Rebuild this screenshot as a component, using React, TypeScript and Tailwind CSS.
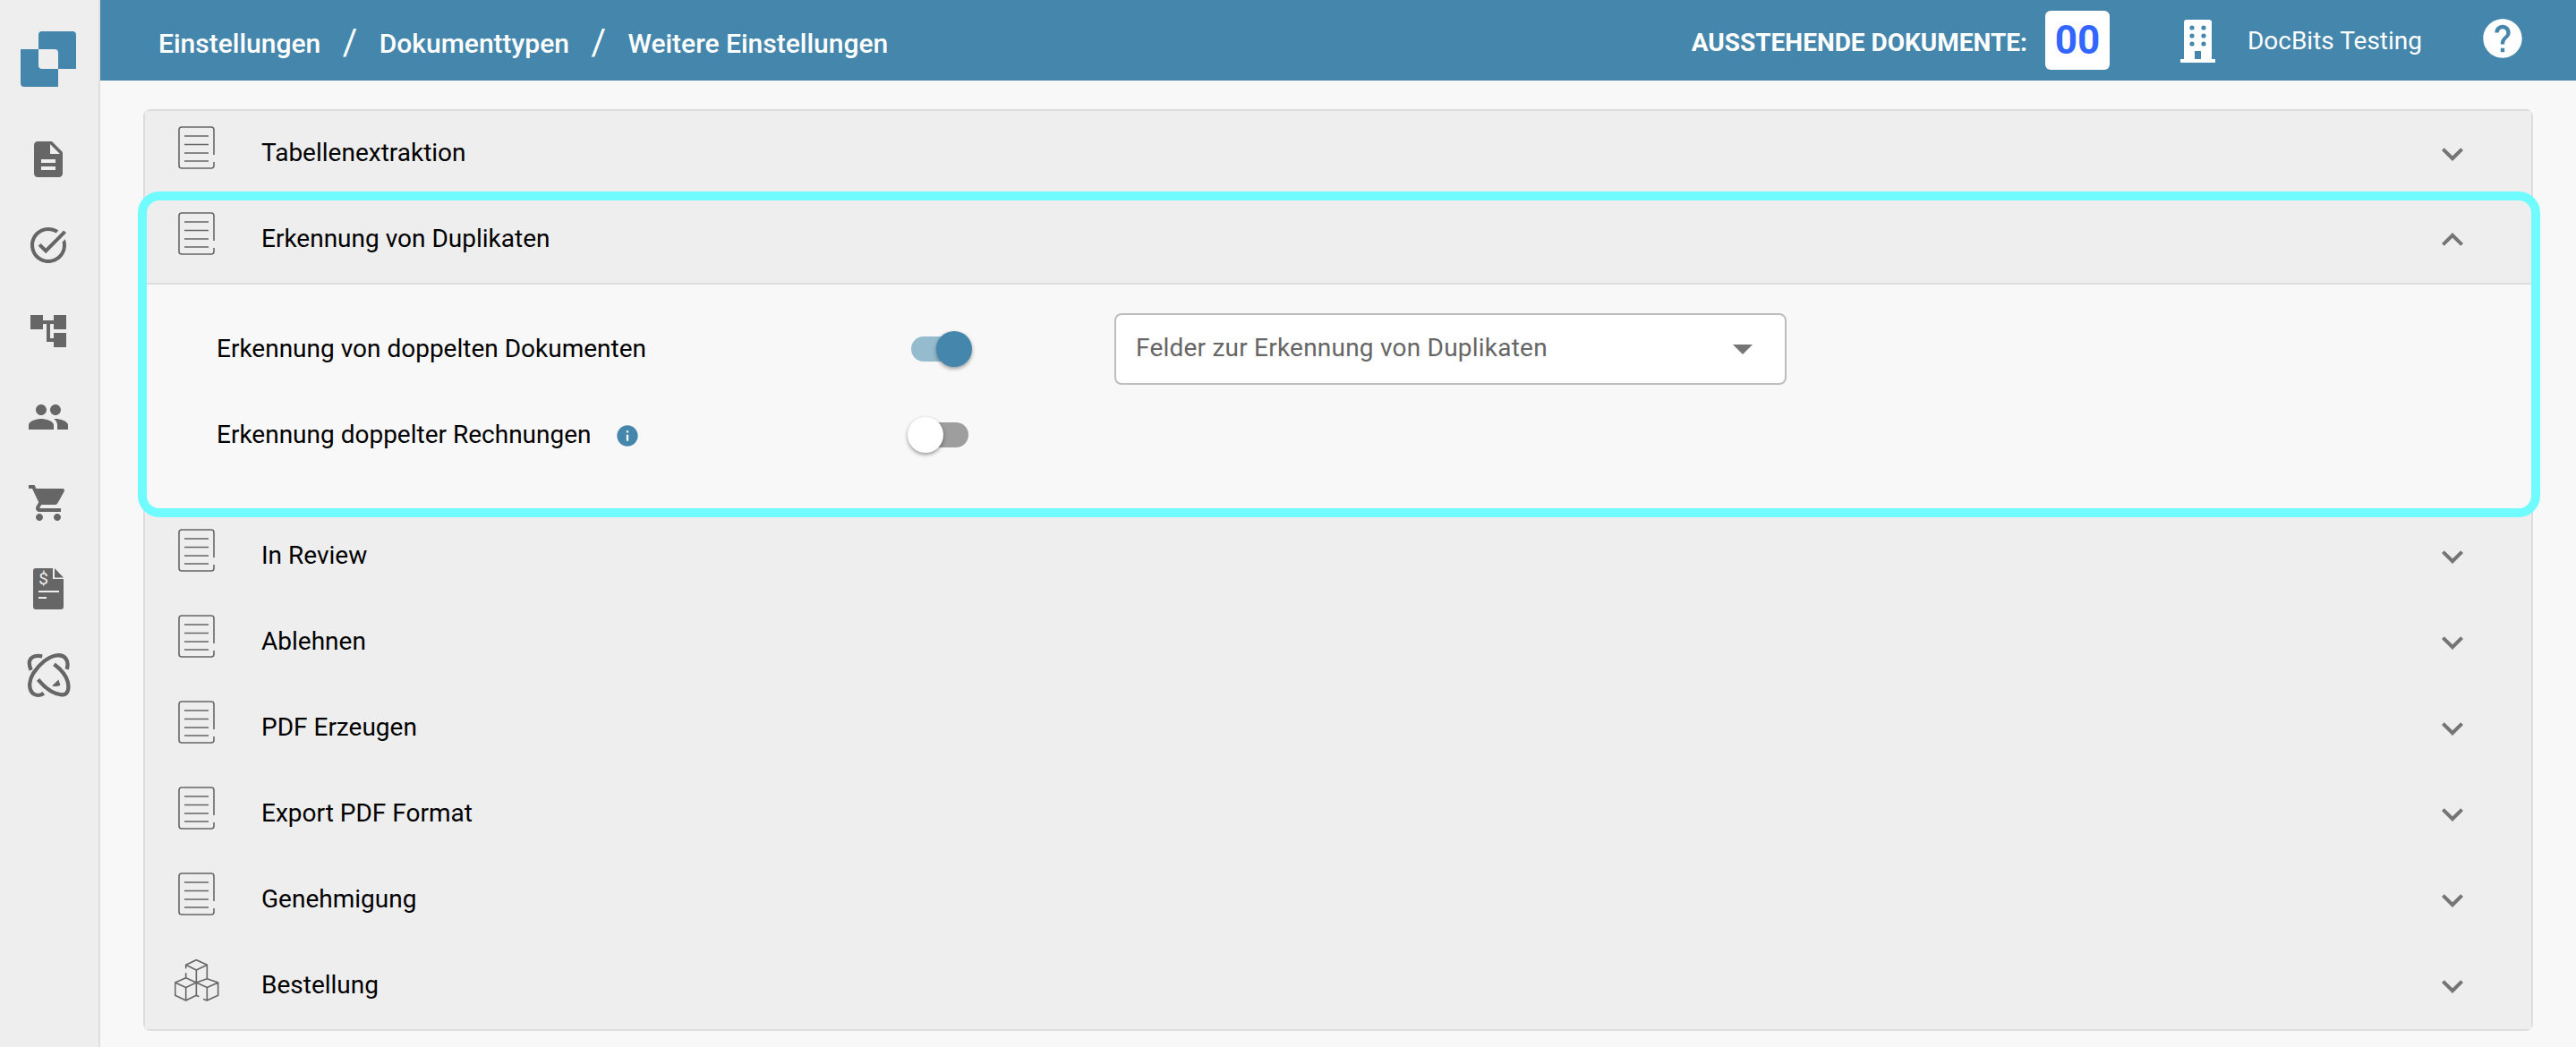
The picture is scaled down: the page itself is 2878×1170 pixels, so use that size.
import React from 'react';
import {
  MdAccountTree,
  MdDescription,
  MdExpandLess,
  MdExpandMore,
  MdHelp,
  MdInfo,
  MdPeople,
  MdShoppingCart,
  MdTaskAlt,
} from 'react-icons/md';

const Logo = () => (
  <svg width="62" height="62" viewBox="0 0 62 62">
    <path d="M20 4a4 4 0 0 1 4-4h34a4 4 0 0 1 4 4v38H42V24a4 4 0 0 0-4-4H20z" fill="#4587ac" />
    <path d="M0 20h20v18a4 4 0 0 0 4 4h18v20H4a4 4 0 0 1-4-4z" fill="#4587ac" />
  </svg>
);

const InvoiceIcon = () => (
  <svg width="34" height="46" viewBox="0 0 34 46">
    <path d="M3 0h19v12h12v31a3 3 0 0 1-3 3H3a3 3 0 0 1-3-3V3a3 3 0 0 1 3-3z" fill="#666" />
    <path d="M24 0l10 10.500H24z" fill="#666" />
    <text x="11.500" y="17.500" textAnchor="middle" fontFamily="Roboto" fontSize="19" fill="#eee">$</text>
    <rect x="6" y="25" width="23" height="2" fill="#eee" />
    <rect x="6" y="32" width="9" height="2" fill="#eee" />
  </svg>
);

const OrbitIcon = () => (
  <svg width="49" height="49" viewBox="28 28 148 148" fill="none" stroke="#666" strokeWidth="13">
    <path d="M163 82C172 50 155 33 130 35C100 38 70 65 50 95C35 120 32 150 50 165C60 172 75 170 85 163" />
    <path d="M80 38C60 35 42 38 37 55C35 65 38 75 42 85" />
    <path d="M66 117C85 140 115 165 145 168C165 170 172 150 166 125C160 100 140 80 120 65" />
    <path d="M113 138L135 117L141 136Q128 142 113 138z" fill="#666" stroke="none" />
  </svg>
);

const BuildingIcon = () => (
  <svg width="39" height="48" viewBox="0 0 39 48" fill="white">
    <path d="M7 0h25a3 3 0 0 1 3 3v41h3a1.500 1.500 0 0 1 0 4H1a1.500 1.500 0 0 1 0-4h3V3a3 3 0 0 1 3-3z" />
    <g fill="#4587ac">
      <circle cx="13" cy="9" r="2.600" /><circle cx="26" cy="9" r="2.600" />
      <circle cx="13" cy="18" r="2.600" /><circle cx="26" cy="18" r="2.600" />
      <circle cx="13" cy="27" r="2.600" /><circle cx="26" cy="27" r="2.600" />
      <rect x="16" y="35" width="7" height="9" />
    </g>
  </svg>
);

const PaperIcon = () => (
  <svg width="41" height="48" viewBox="0 0 41 48" fill="none" stroke="#666" strokeWidth="1.600">
    <path d="M40 32V4a3 3 0 0 0-3-3H4a3 3 0 0 0-3 3v40a3 3 0 0 0 3 3h33a3 3 0 0 0 3-3v-4" />
    <path d="M7 11h27M7 20.500h27M7 30h27M7 39h27" />
  </svg>
);

const CubesIcon = () => (
  <svg width="50" height="47" viewBox="26 28 154 145" fill="none" stroke="#666" strokeWidth="5" strokeLinejoin="round" className="shrink-0">
    <path d="M65 47L101 30L138 47L101 65zM101 65V152M138 47V95M65 47V60M65 75V92" />
    <path d="M28 108L65 92L101 108L65 125zM28 108V152L65 170L101 152M65 125V170" />
    <path d="M101 108L138 95L176 108L138 125zM138 125V168M176 108V152L138 170L125 165M101 152L110 157" />
  </svg>
);

const sideIcons = [
  <MdDescription size={48} />,
  <MdTaskAlt size={48} />,
  <MdAccountTree size={48} />,
  <MdPeople size={48} />,
  <MdShoppingCart size={48} />,
  <InvoiceIcon />,
  <OrbitIcon />,
];

const RowHead = ({ label, open, cubes }: { label: string; open?: boolean; cubes?: boolean }) => (
  <div className="flex h-[96px] items-center bg-[#eeeeee] pl-[37px] pr-[64px]">
    <div className="mb-[14px] flex w-[41px] shrink-0 justify-center">{cubes ? <CubesIcon /> : <PaperIcon />}</div>
    <span className="mb-[3px] ml-[52px] flex-1 text-[28px] text-black">{label}</span>
    {open ? <MdExpandLess size={48} className="text-[#757575]" /> : <MdExpandMore size={48} className="text-[#757575]" />}
  </div>
);

export default function App() {
  return (
    <div className="flex h-[1170px] w-[2878px] overflow-hidden bg-[#f8f8f8] font-['Roboto',sans-serif]">
      {/* Sidebar */}
      <aside className="flex w-[112px] shrink-0 flex-col border-r-2 border-[#e0e0e0] bg-[#eeeeee]">
        <div className="flex h-[130px] justify-center pr-[2px] pt-[35px]">
          <Logo />
        </div>
        {sideIcons.map((icon, i) => (
          <div key={i} className="flex h-[96px] items-center justify-center pr-[2px] text-[#666666]">
            {icon}
          </div>
        ))}
      </aside>

      <div className="flex min-w-0 flex-1 flex-col">
        {/* Top bar */}
        <header className="flex h-[90px] shrink-0 items-center bg-[#4587ac] pl-[65px] text-white">
          <div className="mt-[6px] flex items-center text-[30px] font-medium">
            <span>Einstellungen</span>
            <span className="mx-[24.5px] text-[40px] font-normal">/</span>
            <span>Dokumenttypen</span>
            <span className="mx-[24.5px] text-[40px] font-normal">/</span>
            <span>Weitere Einstellungen</span>
          </div>
          <div className="ml-auto flex items-center pr-[56px]">
            <span className="mt-[6px] text-[28px] font-bold">AUSSTEHENDE DOKUMENTE:</span>
            <span className="ml-[20px] flex h-[66px] w-[72px] items-center justify-center rounded-[6px] bg-white text-[44px] font-bold text-[#3366ff]">
              00
            </span>
            <span className="ml-[79px] mt-[2px]"><BuildingIcon /></span>
            <span className="ml-[36px] mt-[2px] text-[28px]">DocBits Testing</span>
            <MdHelp size={52} className="mb-[5px] ml-[64px]" />
          </div>
        </header>

        {/* Accordion */}
        <main className="mx-[48px] mt-[32px] rounded-[8px] border-2 border-[#dddddd] bg-[#eeeeee]">
          <RowHead label="Tabellenextraktion" />
          <section className="relative">
            <RowHead label="Erkennung von Duplikaten" open />
            <div className="border-t-2 border-[#dddddd] bg-[#f8f8f8] pb-[40px] pl-[80px] pt-[24px] text-[28px] text-black">
              <div className="flex h-[96px] items-center">
                <span className="w-[776px]">Erkennung von doppelten Dokumenten</span>
                <span className="relative h-[28px] w-[62px] rounded-full bg-[#95bbcf]">
                  <span className="absolute right-[-6px] top-[-6px] h-[40px] w-[40px] rounded-full bg-[#4587ac] shadow-[0_2px_4px_rgba(0,0,0,0.4)]" />
                </span>
                <div className="ml-[165px] flex h-[80px] w-[751px] items-center justify-between rounded-[8px] border-2 border-[#bdbdbd] bg-white pl-[22px] pr-[36px] text-[#666666]">
                  <span className="mb-[3px] tracking-[0.22px]">Felder zur Erkennung von Duplikaten</span>
                  <span className="h-0 w-0 border-x-[11px] border-t-[11px] border-x-transparent border-t-[#757575]" />
                </div>
              </div>
              <div className="flex h-[96px] items-center">
                <span className="flex w-[776px] items-center">
                  Erkennung doppelter Rechnungen
                  <MdInfo size={28} className="ml-[26px] mt-[2px] text-[#4587ac]" />
                </span>
                <span className="relative ml-[2px] h-[28px] w-[62px] rounded-full bg-[#9e9e9e]">
                  <span className="absolute left-[-6px] top-[-6px] h-[40px] w-[40px] rounded-full bg-white shadow-[0_2px_4px_rgba(0,0,0,0.4)]" />
                </span>
              </div>
            </div>
            {/* Highlight annotation */}
            <div className="pointer-events-none absolute -bottom-[4px] -left-[8px] -right-[10px] -top-[6px] rounded-[24px] border-[10px] border-[#70fbff]" />
          </section>
          <RowHead label="In Review" />
          <RowHead label="Ablehnen" />
          <RowHead label="PDF Erzeugen" />
          <RowHead label="Export PDF Format" />
          <RowHead label="Genehmigung" />
          <RowHead label="Bestellung" cubes />
        </main>
      </div>
    </div>
  );
}
